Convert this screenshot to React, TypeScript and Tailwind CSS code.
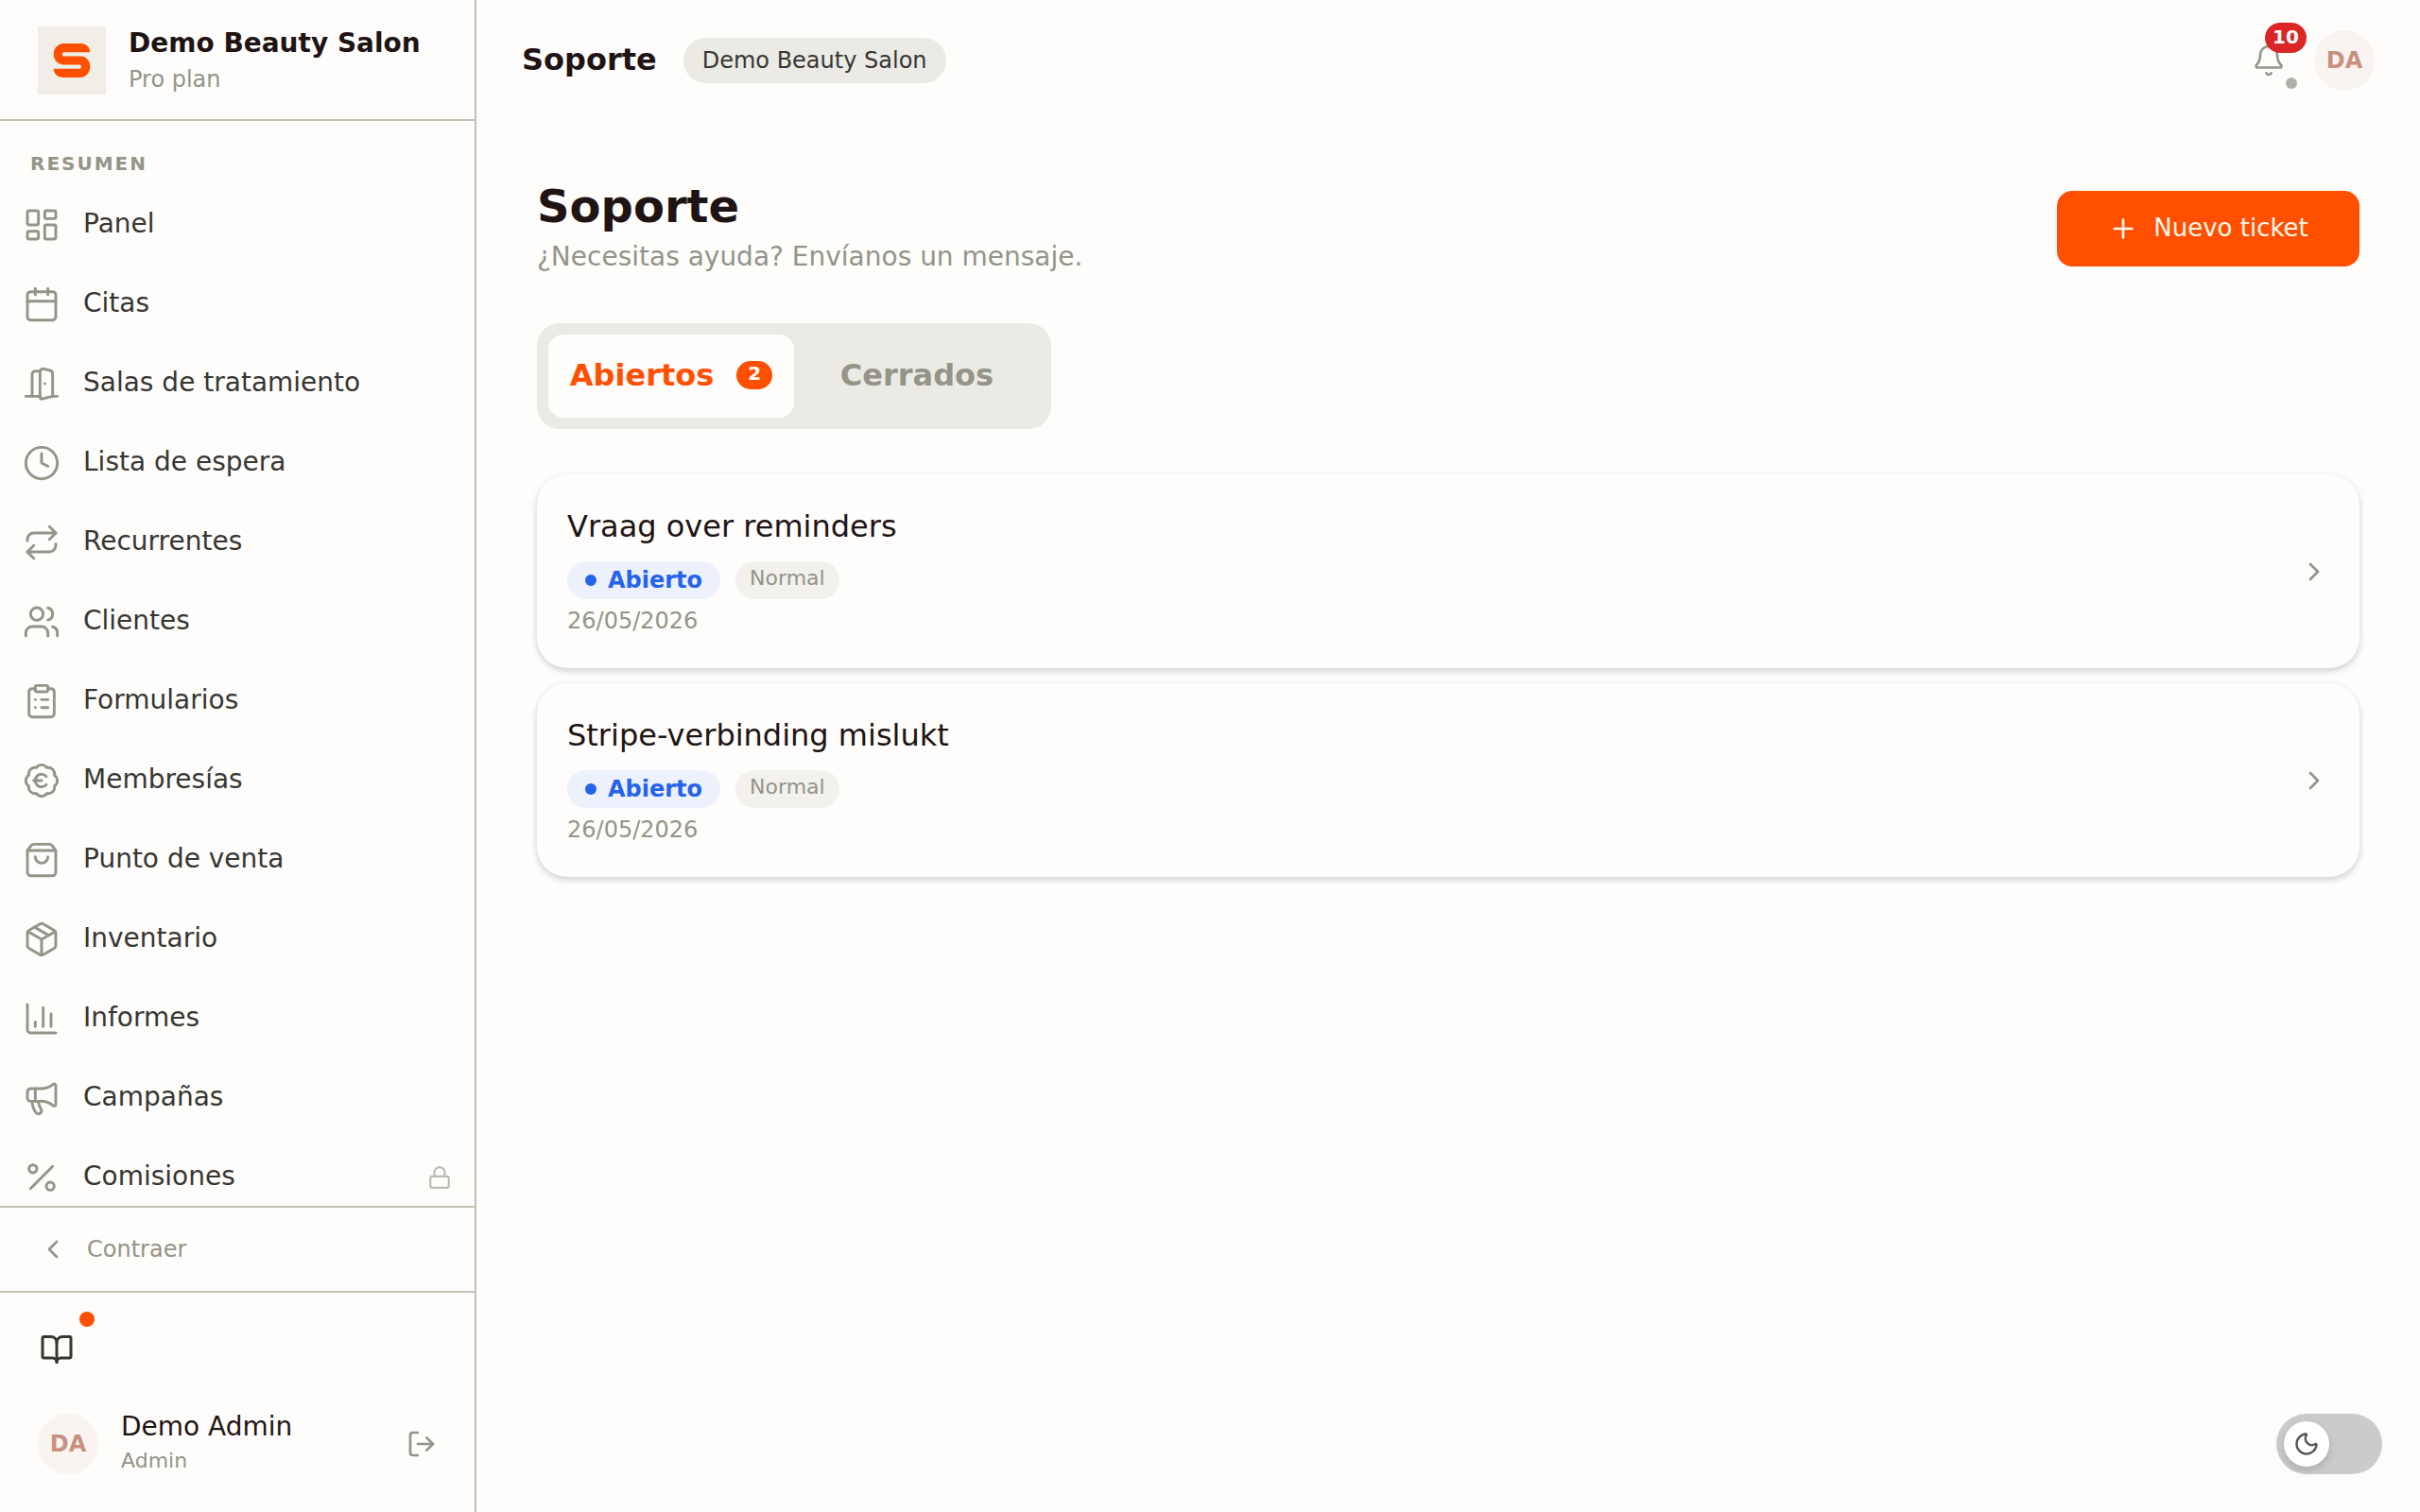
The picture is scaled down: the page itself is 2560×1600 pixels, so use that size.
import { useState } from 'react'
import {
  BadgeEuro,
  Bell,
  BookOpen,
  Calendar,
  ChartColumn,
  ChevronLeft,
  ChevronRight,
  ClipboardList,
  Clock,
  DoorOpen,
  LayoutDashboard,
  Lock,
  LogOut,
  Megaphone,
  Moon,
  Package,
  Percent,
  Plus,
  Repeat,
  ShoppingBag,
  Users,
  type LucideIcon,
} from 'lucide-react'

interface NavItem {
  label: string
  icon: LucideIcon
  locked?: boolean
}

interface Ticket {
  id: number
  subject: string
  status: string
  priority: string
  date: string
}

const navItems: NavItem[] = [
  { label: 'Panel', icon: LayoutDashboard },
  { label: 'Citas', icon: Calendar },
  { label: 'Salas de tratamiento', icon: DoorOpen },
  { label: 'Lista de espera', icon: Clock },
  { label: 'Recurrentes', icon: Repeat },
  { label: 'Clientes', icon: Users },
  { label: 'Formularios', icon: ClipboardList },
  { label: 'Membresías', icon: BadgeEuro },
  { label: 'Punto de venta', icon: ShoppingBag },
  { label: 'Inventario', icon: Package },
  { label: 'Informes', icon: ChartColumn },
  { label: 'Campañas', icon: Megaphone },
  { label: 'Comisiones', icon: Percent, locked: true },
]

const openTickets: Ticket[] = [
  { id: 1, subject: 'Vraag over reminders', status: 'Abierto', priority: 'Normal', date: '26/05/2026' },
  { id: 2, subject: 'Stripe-verbinding mislukt', status: 'Abierto', priority: 'Normal', date: '26/05/2026' },
]

function Logo() {
  return (
    <svg viewBox="0 0 72 72" className="size-18 shrink-0 bg-[#f0eee6]" aria-hidden="true">
      <path
        fill="#ff4f00"
        d="M27.5 18H46c5 0 9.300 4 9.300 9.300H28c-1.400 0-2.200 1-2.200 2.100s.8 2.100 2.200 2.100h17c6 0 10.300 4.800 10.300 11S51 54 45 54H27c-6 0-10-4-10.300-9.300H44c1.300 0 2-.9 2-2.100s-.7-2.100-2-2.100H27.500c-6.200 0-10.800-5-10.800-11.200S21.300 18 27.500 18Z"
      />
    </svg>
  )
}

function Avatar() {
  return (
    <span className="flex size-16 shrink-0 items-center justify-center rounded-full bg-[#f9f4f0] text-[24px] font-bold text-[#c8917f]">
      DA
    </span>
  )
}

function Sidebar() {
  return (
    <aside className="flex w-[504px] shrink-0 flex-col border-r-2 border-[#c4c3b2]">
      <div className="flex h-32 shrink-0 items-center gap-6 border-b-2 border-[#c4c3b2] px-10 pt-0.5">
        <Logo />
        <div>
          <p className="text-[28px] leading-10 font-bold text-[#1f1414]">Demo Beauty Salon</p>
          <p className="text-[24px] leading-9 text-[#949488]">Pro plan</p>
        </div>
      </div>

      <nav className="min-h-0 flex-1 overflow-hidden pt-8" aria-label="Principal">
        <h2 className="mb-2.5 px-8 text-[20px] leading-[26px] font-bold tracking-widest text-[#949488] uppercase">
          Resumen
        </h2>
        <ul>
          {navItems.map(({ label, icon: Icon, locked }) => (
            <li key={label}>
              <a href="#" className="flex h-21 items-center gap-6 px-6 text-[28px] text-[#373633]">
                <Icon size={40} strokeWidth={1.75} className="shrink-0 text-[#949488]" />
                <span className="flex-1 pb-0.5">{label}</span>
                {locked && <Lock size={26} className="text-[#bcbcb4]" />}
              </a>
            </li>
          ))}
        </ul>
      </nav>

      <button className="flex h-[90px] shrink-0 items-center gap-5 border-t-2 border-[#c4c3b2] px-10 text-[24px] text-[#949488]">
        <ChevronLeft size={32} />
        Contraer
      </button>

      <div className="shrink-0 border-t-2 border-[#c4c3b2] p-5 pb-9">
        <button aria-label="Novedades" className="relative flex size-20 items-center justify-center text-[#373633]">
          <BookOpen size={36} />
          <span className="absolute top-0 right-0 size-4 rounded-full bg-[#ff4f00]" />
        </button>
        <div className="mt-6 flex items-center gap-6 px-5">
          <Avatar />
          <div className="flex-1">
            <p className="text-[28px] leading-9 text-[#1f1414]">Demo Admin</p>
            <p className="text-[22px] leading-9 text-[#949488]">Admin</p>
          </div>
          <button aria-label="Cerrar sesión" className="text-[#949488]">
            <LogOut size={32} />
          </button>
        </div>
      </div>
    </aside>
  )
}

function TopBar() {
  return (
    <header className="flex h-32 shrink-0 items-center px-12">
      <p className="pb-0.5 text-[32px] font-bold text-[#1f1414]">Soporte</p>
      <span className="ml-7 flex h-12 items-center rounded-full bg-[#ebeae5] px-5 text-[24px] text-[#373633]">
        Demo Beauty Salon
      </span>
      <div className="ml-auto flex items-center gap-2">
        <button aria-label="Notificaciones" className="relative flex size-20 items-center justify-center text-[#949488]">
          <Bell size={36} strokeWidth={1.75} />
          <span className="absolute top-0 right-0 flex h-8 w-11 items-center justify-center rounded-full bg-[#dc2626] pb-0.5 text-[20px] font-bold text-white">
            10
          </span>
          <span className="absolute right-2.5 bottom-2.5 size-3 rounded-full bg-[#b1b1ac]" />
        </button>
        <Avatar />
      </div>
    </header>
  )
}

function TicketCard({ ticket }: { ticket: Ticket }) {
  return (
    <a
      href="#"
      className="flex items-center rounded-[32px] bg-[#fefdfb] p-8 shadow-[0_2px_6px_rgba(0,0,0,0.12),0_4px_8px_rgba(0,0,0,0.08)]"
    >
      <div className="flex-1">
        <h2 className="text-[32px] leading-[46px] text-[#1f1414]">{ticket.subject}</h2>
        <div className="mt-3.5 flex gap-4">
          <span className="flex h-10 items-center gap-3 rounded-full bg-[#edf1fc] px-[19px] text-[24px] font-bold text-[#2563eb]">
            <span className="size-3 rounded-full bg-[#2563eb]" />
            {ticket.status}
          </span>
          <span className="h-10 rounded-full bg-[#f2f1ed] px-[15px] text-[22px] leading-9 text-[#949488]">
            {ticket.priority}
          </span>
        </div>
        <p className="mt-1.5 text-[24px] leading-[35px] text-[#949488]">{ticket.date}</p>
      </div>
      <ChevronRight size={32} className="text-[#949488]" />
    </a>
  )
}

function ThemeToggle() {
  return (
    <button
      role="switch"
      aria-checked={false}
      aria-label="Modo oscuro"
      className="fixed right-10 bottom-10 h-16 w-28 rounded-full bg-[#cbcbcb] p-2"
    >
      <span className="flex size-12 items-center justify-center rounded-full bg-white text-[#555555] shadow-[0_4px_8px_rgba(0,0,0,0.15)]">
        <Moon size={28} />
      </span>
    </button>
  )
}

export default function App() {
  const [tab, setTab] = useState<'open' | 'closed'>('open')
  const tickets = tab === 'open' ? openTickets : []

  const activeTab = 'bg-[#fefdfb] text-[#ff4f00]'
  const idleTab = 'text-[#949488]'

  return (
    <div className="flex h-screen bg-[#fefdfb] font-['DejaVu_Sans',sans-serif]">
      <Sidebar />
      <div className="flex min-w-0 flex-1 flex-col">
        <TopBar />
        <main className="flex-1 p-16">
          <div className="flex items-center justify-between">
            <div>
              <h1 className="text-[48px] leading-13 font-bold text-[#1f1414]">Soporte</h1>
              <p className="mt-2 text-[28px] leading-10 text-[#949488]">¿Necesitas ayuda? Envíanos un mensaje.</p>
            </div>
            <button className="flex h-20 w-80 items-center justify-center gap-4 rounded-2xl bg-[#ff4f00] text-[26px] text-[#fff8eb]">
              <Plus size={32} />
              <span className="pb-0.5">Nuevo ticket</span>
            </button>
          </div>

          <div
            role="tablist"
            className="mt-[50px] grid h-28 w-136 grid-cols-2 rounded-3xl bg-[#ebeae5] p-3 text-[32px] font-bold"
          >
            <button
              role="tab"
              aria-selected={tab === 'open'}
              onClick={() => setTab('open')}
              className={`flex items-center justify-center gap-6 rounded-2xl pb-0.5 ${tab === 'open' ? activeTab : idleTab}`}
            >
              Abiertos
              <span className="h-[30px] rounded-full bg-[#ff4f00] px-3 text-[20px] leading-[26px] text-[#fefdfb]">
                {openTickets.length}
              </span>
            </button>
            <button
              role="tab"
              aria-selected={tab === 'closed'}
              onClick={() => setTab('closed')}
              className={`flex items-center justify-center gap-6 rounded-2xl pb-0.5 ${tab === 'closed' ? activeTab : idleTab}`}
            >
              Cerrados
            </button>
          </div>

          <div className="mt-12 flex flex-col gap-4">
            {tickets.map(ticket => (
              <TicketCard key={ticket.id} ticket={ticket} />
            ))}
          </div>
        </main>
      </div>
      <ThemeToggle />
    </div>
  )
}
